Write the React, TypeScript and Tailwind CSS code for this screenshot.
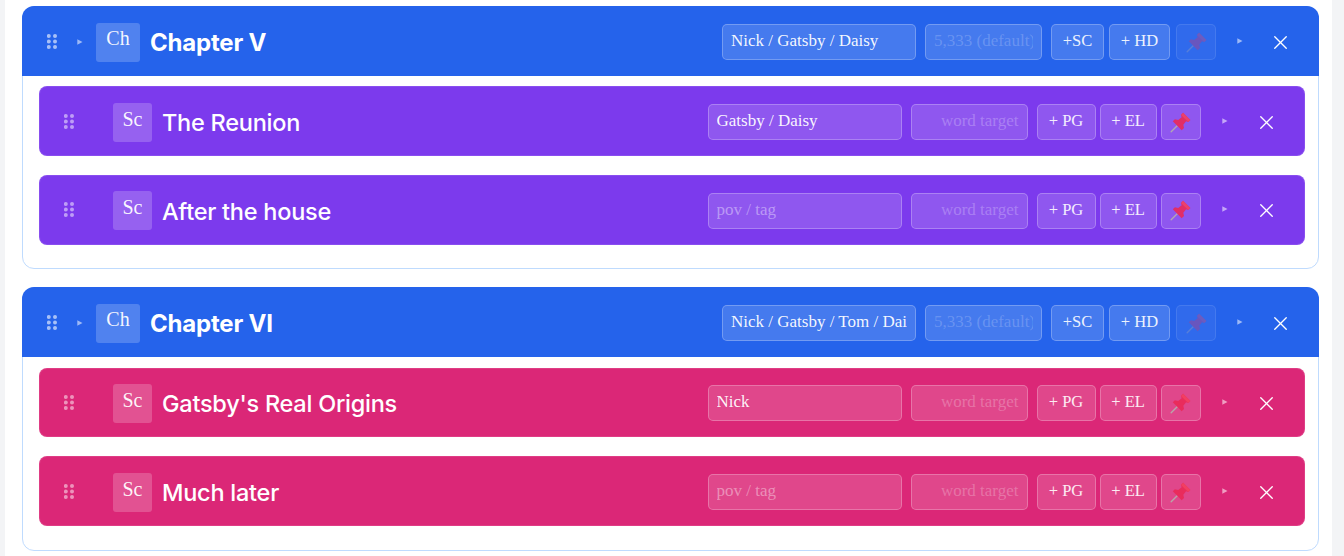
import { X } from 'lucide-react';

type Scene = { title: string; pov: string };
type Chapter = { title: string; pov: string; scenes: Scene[]; sceneBg: string };

const CHAPTERS: Chapter[] = [
  {
    title: 'Chapter V',
    pov: 'Nick / Gatsby / Daisy',
    sceneBg: 'bg-[#7c3aed]',
    scenes: [
      { title: 'The Reunion', pov: 'Gatsby / Daisy' },
      { title: 'After the house', pov: '' },
    ],
  },
  {
    title: 'Chapter VI',
    pov: 'Nick / Gatsby / Tom / Daisy',
    sceneBg: 'bg-[#db2777]',
    scenes: [
      { title: "Gatsby's Real Origins", pov: 'Nick' },
      { title: 'Much later', pov: '' },
    ],
  },
];

const FIELD = 'h-[36px] rounded-[5px] border border-white/25 bg-white/15 outline-none px-2 pb-[2px] text-[17px] text-white/95 font-["Liberation_Serif",serif]';

function Grip({ className }: { className: string }) {
  return (
    <svg width="10" height="15" viewBox="0 0 10 15" className={className} fill="currentColor">
      {[1.8, 8].map(x =>
        [2, 7.5, 13].map(y => <circle key={`${x}-${y}`} cx={x} cy={y} r="2" />)
      )}
    </svg>
  );
}

function Arrow() {
  return (
    <svg width="6" height="6" viewBox="0 0 6 6" className="text-white/55" fill="currentColor">
      <path d="M0.3 0.3 L5.5 3 L0.3 5.7 Z" />
    </svg>
  );
}

function Pin({ dim }: { dim?: boolean }) {
  return (
    <svg width="21" height="21" viewBox="0 0 18 18" className={dim ? 'opacity-30' : 'opacity-90'}>
      <path d="M1 17 L7.5 10.5" stroke="#b6b0ac" strokeWidth="1.2" strokeLinecap="round" />
      <path d="M11.2 0.6 L17.4 6.8 L15.6 8.6 L13.8 8 L11.4 11 L12 13.8 L10 15.6 L2.4 8 L4.2 6.2 L7 6.8 L10 4.4 L9.4 2.6 Z" fill="#ea2a58" />
      <path d="M11.2 0.6 L17.4 6.8 L15.6 8.6 L9.4 2.6 Z" fill="#f43f5e" />
    </svg>
  );
}

function Tag({ label, className }: { label: string; className: string }) {
  return (
    <button className={`h-[36px] rounded-[5px] border border-white/25 bg-white/15 flex items-center justify-center pb-[2px] text-[16.5px] text-white/90 ${className}`}>{label}</button>
  );
}

function SceneRow({ scene, bg }: { scene: Scene; bg: string }) {
  return (
    <div className={`${bg} h-[69.5px] rounded-[8px] border border-white/10 flex items-center pt-[2px] pl-[24px] pr-[26.5px]`}>
      <Grip className="text-white/50 mr-[39px] -mt-[2px]" />
      <div className="w-[39px] h-[39px] rounded-[3px] bg-white/20 flex items-start justify-center pt-[4px] text-[20px] leading-[24px] text-white/95 mr-[10px]">Sc</div>
      <div className="flex-1 font-['Inter',sans-serif] font-medium text-[23.5px] text-white mt-[1px] tracking-[-0.25px]">{scene.title}</div>
      <input readOnly value={scene.pov} placeholder="pov / tag" className={`${FIELD} w-[194px] placeholder:text-white/40`} />
      <input readOnly placeholder="word target" className={`${FIELD} w-[117px] ml-[9px] text-right placeholder:text-white/25`} />
      <Tag label="+ PG" className="w-[59px] ml-[9px]" />
      <Tag label="+ EL" className="w-[57px] ml-[4px]" />
      <div className="h-[36px] w-[40px] ml-[4px] rounded-[5px] border border-white/25 bg-white/15 flex items-center justify-center"><Pin /></div>
      <div className="ml-[21px] mr-[27px] -mt-[3px] flex"><Arrow /></div>
      <X size={23} strokeWidth={1.4} className="text-white" />
    </div>
  );
}

function ChapterCard({ chapter }: { chapter: Chapter }) {
  return (
    <div className="h-[263.3px] rounded-[12px] border border-[#bfdbfe] mb-[18px] flex flex-col">
      <div className="h-[70px] -mx-px -mt-px rounded-t-[12px] bg-[#2563eb] flex items-center pt-[2px] pl-[25px] pr-[27.5px] shrink-0">
        <Grip className="text-white/60 mr-[20px] -mt-[2px]" />
        <Arrow />
        <div className="w-[44px] h-[39px] rounded-[3px] bg-white/20 flex items-start justify-center pt-[3px] text-[20px] leading-[24px] text-white/95 ml-[13px] mr-[10px]">Ch</div>
        <div className="flex-1 font-['Inter',sans-serif] font-bold text-[24px] text-white mt-[1px] tracking-[-0.2px]">{chapter.title}</div>
        <input readOnly value={chapter.pov} className={`${FIELD} w-[194px]`} />
        <input readOnly placeholder="5,333 (default)" className={`${FIELD} w-[117px] ml-[9px] placeholder:text-white/20`} />
        <Tag label="+SC" className="w-[53px] ml-[9px]" />
        <Tag label="+ HD" className="w-[61px] ml-[5px]" />
        <div className="h-[36px] w-[40px] ml-[6px] rounded-[5px] border border-white/10 bg-white/5 flex items-center justify-center"><Pin dim /></div>
        <div className="ml-[21px] mr-[25.5px] -mt-[3px] flex"><Arrow /></div>
        <X size={23} strokeWidth={1.4} className="text-white" />
      </div>
      <div className="flex flex-col gap-[19.4px] pt-[10.3px] pl-[16px] pr-[13px] flex-1 bg-transparent">
        {chapter.scenes.map(s => <SceneRow key={s.title} scene={s} bg={chapter.sceneBg} />)}
      </div>
    </div>
  );
}

export default function App() {
  return (
    <div className="w-[1344px] h-[556px] overflow-hidden bg-[#f3f4f6] font-['Liberation_Serif',serif]">
      <div className="ml-[5px] mr-[12px] h-full bg-white pl-[17px] pr-[13px] pt-[6px]">
        {CHAPTERS.map(c => <ChapterCard key={c.title} chapter={c} />)}
      </div>
    </div>
  );
}
